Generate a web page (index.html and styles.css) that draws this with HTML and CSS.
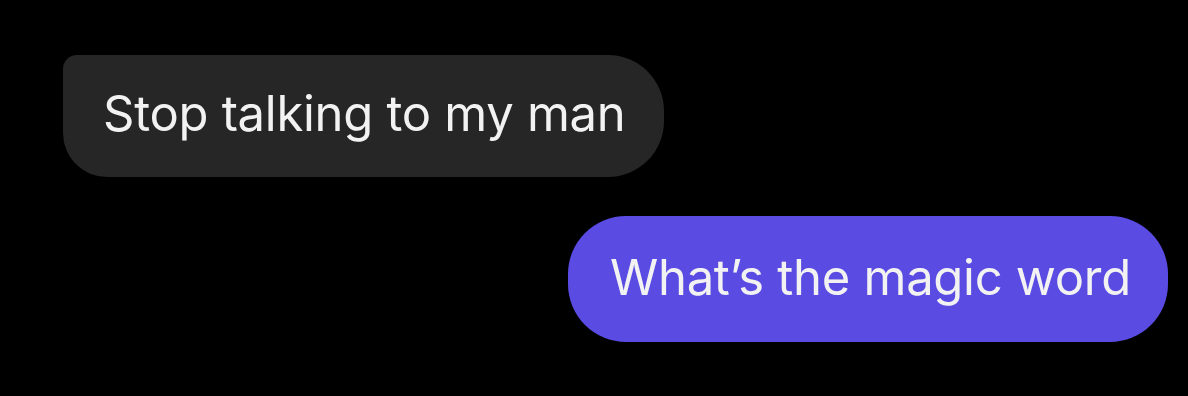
FILE: index.html
```html
<!DOCTYPE html>
<html>
<head>
<meta charset="utf-8">
<link rel="stylesheet" href="styles.css">
</head>
<body>
<div class="chat">
  <div class="bubble received">Stop talking to my man</div>
  <div class="bubble sent">What’s the magic word</div>
</div>
</body>
</html>
```
FILE: styles.css
```css
html, body {
  margin: 0;
  padding: 0;
  background: #000;
  width: 1188px;
  height: 396px;
  overflow: hidden;
}
.chat {
  display: flex;
  flex-direction: column;
  padding: 55px 20px 0 63px;
  gap: 39px;
}
.bubble {
  font-family: Inter, "Noto Sans", sans-serif;
  font-size: 49px;
  color: #f2f2f2;
  height: 122px;
  box-sizing: border-box;
  display: flex;
  align-items: center;
  letter-spacing: -0.3px;
  padding-bottom: 6px;
}
.received {
  align-self: flex-start;
  background: #262626;
  border-radius: 14px 56px 56px 44px;
  padding-left: 40px;
  width: 601px;
}
.sent {
  align-self: flex-end;
  background: #5a4be3;
  border-radius: 58px;
  padding-left: 42px;
  width: 600px;
  height: 126px;
  padding-bottom: 4px;
}
```
